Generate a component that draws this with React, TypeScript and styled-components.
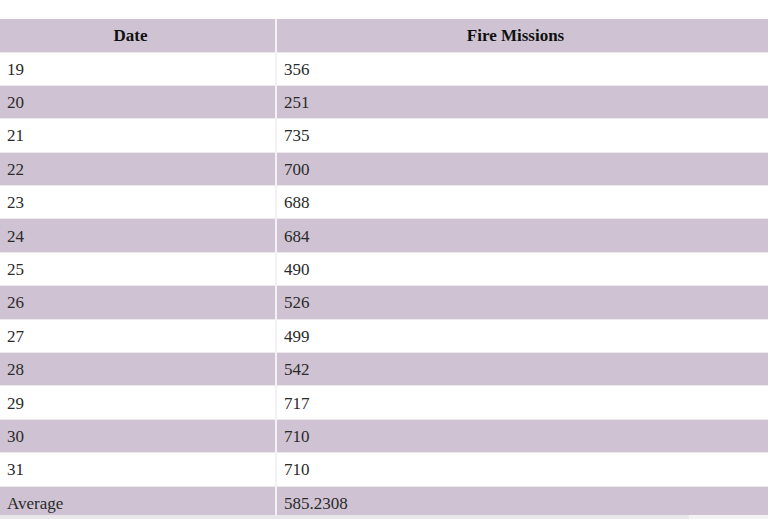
import React from 'react'
import styled, { createGlobalStyle } from 'styled-components'

const rows: [string, string][] = [
  ['19', '356'],
  ['20', '251'],
  ['21', '735'],
  ['22', '700'],
  ['23', '688'],
  ['24', '684'],
  ['25', '490'],
  ['26', '526'],
  ['27', '499'],
  ['28', '542'],
  ['29', '717'],
  ['30', '710'],
  ['31', '710'],
  ['Average', '585.2308'],
]

const GlobalStyle = createGlobalStyle`
  html, body {
    overflow: hidden;
  }
  body {
    margin: 0;
    background: #ffffff;
    font-family: "Liberation Serif", "Times New Roman", serif;
    color: #2a2a2a;
  }
`

const Page = styled.div`
  padding-top: 19px;
`

const Table = styled.table`
  width: 100%;
  border-collapse: collapse;
  font-size: 17px;
`

const HeadCell = styled.th<{ $wide?: boolean }>`
  background: #cfc3d3;
  height: 33px;
  padding: 2px 22px 0 8px;
  font-weight: 700;
  text-align: center;
  color: #111111;
  width: ${(p) => (p.$wide ? 'auto' : '276px')};
  border-right: 2px solid #f4f1f5;
  border-bottom: 1px solid #ece8ee;
  box-sizing: border-box;
  &:last-child {
    border-right: none;
  }
`

const Row = styled.tr<{ $shaded: boolean }>`
  background: ${(p) => (p.$shaded ? '#cfc3d3' : '#ffffff')};
`

const Cell = styled.td`
  height: 33.4px;
  padding: 2px 7px 0;
  text-align: left;
  border-right: 2px solid #f4f1f5;
  border-bottom: 1px solid #ece8ee;
  box-sizing: border-box;
  &:last-child {
    border-right: none;
  }
`

const ScrollTrack = styled.div`
  position: fixed;
  left: 0;
  right: 0;
  bottom: 0;
  height: 4px;
  background: #f3f3f4;
  display: flex;
`

const ScrollThumb = styled.div`
  width: 689px;
  background: #e9e7ea;
`

export default function App() {
  return (
    <>
      <GlobalStyle />
      <Page>
        <Table>
          <thead>
            <tr>
              <HeadCell>Date</HeadCell>
              <HeadCell $wide>Fire Missions</HeadCell>
            </tr>
          </thead>
          <tbody>
            {rows.map(([date, count], i) => (
              <Row key={date} $shaded={i % 2 === 1}>
                <Cell>{date}</Cell>
                <Cell>{count}</Cell>
              </Row>
            ))}
          </tbody>
        </Table>
      </Page>
      <ScrollTrack>
        <ScrollThumb />
      </ScrollTrack>
    </>
  )
}
